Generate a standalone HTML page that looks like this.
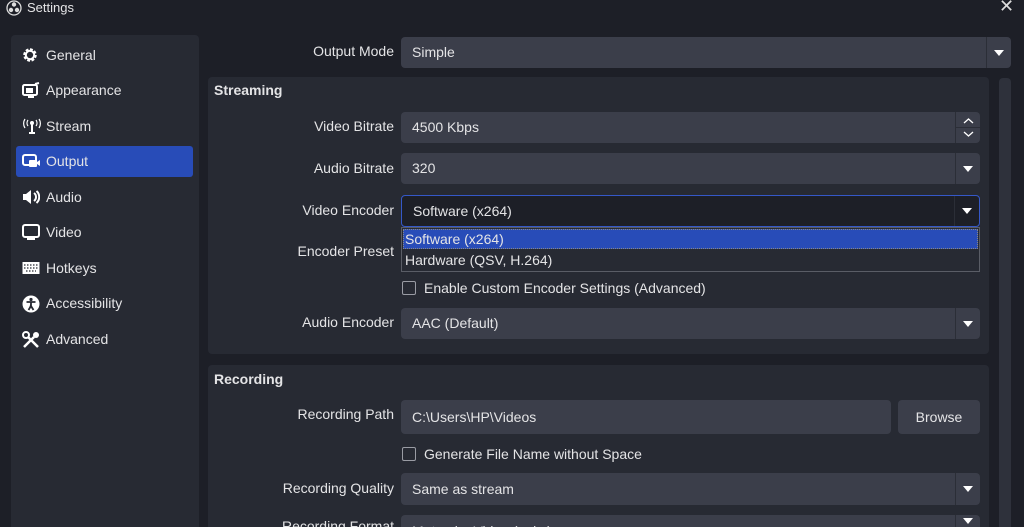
<!DOCTYPE html><html style="width:1024px;height:527px;overflow:hidden"><head><style>
*{box-sizing:border-box;margin:0;padding:0}
body{width:1024px;height:527px;overflow:hidden;background:#1d1f27;font-family:"Liberation Sans",sans-serif;font-size:14px;color:#e4e4e6;position:relative}
.a{position:absolute}
.panel{background:#272a33;border-radius:4px}
.item{position:absolute;left:16px;width:177px;height:31px;line-height:31px;padding-left:30px;font-size:14px}
.item svg{position:absolute;left:6px;top:7px}
.lbl{position:absolute;right:630px;text-align:right;white-space:nowrap}
.in{position:absolute;background:#3b3e4a;border-radius:4px;padding-left:11px;white-space:nowrap}
.arr{position:absolute;right:0;top:0;bottom:0;width:25px;border-left:1px solid #2b2e37}
.arr:after{content:"";position:absolute;left:7px;top:50%;margin-top:-3px;border-left:5.5px solid transparent;border-right:5.5px solid transparent;border-top:6px solid #fff}
.cb{position:absolute;width:14px;height:14px;border:1.5px solid #9a9ca4;border-radius:2px}
</style></head><body>
<svg class="a" style="left:6px;top:0" width="16" height="16" viewBox="0 0 16 16"><circle cx="8" cy="8" r="7" fill="none" stroke="#ddd" stroke-width="1.3"/><circle cx="8" cy="4.5" r="2.2" fill="#ddd"/><circle cx="5" cy="10" r="2.2" fill="#ddd"/><circle cx="11" cy="10" r="2.2" fill="#ddd"/></svg>
<div class="a" style="left:27px;top:0;font-size:13px">Settings</div>
<div class="a" style="left:999px;top:-4px;font-size:18px;color:#ddd">✕</div>

<div class="a panel" style="left:11px;top:35px;width:188px;height:492px;border-radius:4px 4px 0 0"></div>
<div class="item" style="top:40px"><svg width="16" height="16" viewBox="0 0 16 16"><circle cx="8" cy="8" r="5" fill="none" stroke="#fff" stroke-width="3.5" stroke-dasharray="2.5 1.4"/><circle cx="8" cy="8" r="4.2" fill="none" stroke="#fff" stroke-width="2"/></svg>General</div>
<div class="item" style="top:75px"><svg width="18" height="18" viewBox="0 0 18 18"><rect x="1" y="3" width="14" height="10" rx="1.5" fill="none" stroke="#fff" stroke-width="2"/><rect x="4" y="6" width="7" height="5" fill="#fff"/><path d="M6 15h6M13 2l4-1" stroke="#fff" stroke-width="2"/></svg>Appearance</div>
<div class="item" style="top:111px"><svg width="20" height="16" viewBox="0 0 20 16"><path d="M10 6v9M7 15h6" stroke="#fff" stroke-width="2"/><circle cx="10" cy="5" r="2" fill="#fff"/><path d="M6 2a5 5 0 0 0 0 6M14 2a5 5 0 0 1 0 6M3 1a8 8 0 0 0 0 9M17 1a8 8 0 0 1 0 9" fill="none" stroke="#fff" stroke-width="1.2"/></svg>Stream</div>
<div class="item" style="top:146px;background:#284cb8;border-radius:3px"><svg width="18" height="16" viewBox="0 0 18 16"><rect x="1" y="2" width="13" height="10" rx="2" fill="none" stroke="#fff" stroke-width="2"/><rect x="7" y="7" width="8" height="7" rx="1" fill="#fff"/><path d="M15 9l3-2v6l-3-2z" fill="#fff"/></svg>Output</div>
<div class="item" style="top:182px"><svg width="18" height="16" viewBox="0 0 18 16"><path d="M1 5h3l5-4v14l-5-4H1z" fill="#fff"/><path d="M12 4a5 5 0 0 1 0 8M14.5 2a8 8 0 0 1 0 12" fill="none" stroke="#fff" stroke-width="2"/></svg>Audio</div>
<div class="item" style="top:217px"><svg width="18" height="16" viewBox="0 0 18 16"><rect x="1" y="1" width="16" height="12" rx="2" fill="none" stroke="#fff" stroke-width="2"/><path d="M5 15h8" stroke="#fff" stroke-width="2"/></svg>Video</div>
<div class="item" style="top:253px"><svg width="18" height="16" viewBox="0 0 18 16"><rect x="0.5" y="2" width="17" height="12" fill="#fff"/><path d="M2 5h14M2 8h14M4 11h10" stroke="#272a33" stroke-width="1.3" stroke-dasharray="1.5 1.5"/></svg>Hotkeys</div>
<div class="item" style="top:288px"><svg width="18" height="18" viewBox="0 0 18 18"><circle cx="9" cy="9" r="8.5" fill="#fff"/><circle cx="9" cy="4.5" r="1.6" fill="#272a33"/><path d="M4.5 7h9M9 7v4l-2.5 4M9 11l2.5 4" stroke="#272a33" stroke-width="1.8"/></svg>Accessibility</div>
<div class="item" style="top:324px"><svg width="18" height="18" viewBox="0 0 18 18"><path d="M2 16L12 6M6 6l10 10" stroke="#fff" stroke-width="2.5"/><circle cx="4" cy="4" r="3" fill="none" stroke="#fff" stroke-width="2"/><circle cx="14" cy="4" r="3" fill="#fff"/></svg>Advanced</div>

<div class="lbl" style="top:43px">Output Mode</div>
<div class="in" style="left:401px;top:37px;width:610px;height:31px;line-height:31px">Simple<div class="arr"></div></div>

<div class="a" style="left:999px;top:78px;width:12px;height:449px;background:#2e313b;border-radius:4px 4px 0 0"></div>

<div class="a panel" style="left:208px;top:77px;width:781px;height:277px"></div>
<div class="a" style="left:214px;top:82px;font-weight:bold">Streaming</div>
<div class="lbl" style="top:118px">Video Bitrate</div>
<div class="in" style="left:401px;top:112px;width:579px;height:31px;line-height:31px">4500 Kbps<div class="a" style="right:0;top:0;bottom:0;width:25px;border-left:1px solid #2b2e37"><div class="a" style="left:0;right:0;top:15px;border-top:1px solid #2b2e37"></div><svg class="a" style="left:6px;top:3px" width="13" height="25" viewBox="0 0 13 25"><path d="M2 8l4.5-4 4.5 4M2 17l4.5 4 4.5-4" fill="none" stroke="#fff" stroke-width="1.3"/></svg></div></div>
<div class="lbl" style="top:160px">Audio Bitrate</div>
<div class="in" style="left:401px;top:153px;width:579px;height:31px;line-height:31px">320<div class="arr"></div></div>
<div class="lbl" style="top:202px">Video Encoder</div>
<div class="in" style="left:401px;top:195px;width:579px;height:32px;line-height:30px;background:#1d1f27;border:1px solid #3558c8">Software (x264)<div class="arr"></div></div>
<div class="lbl" style="top:243px">Encoder Preset</div>
<div class="a" style="left:401px;top:227px;width:579px;height:45px;background:#272a33;border:1px solid #5a5d66"></div>
<div class="a" style="left:403px;top:229px;width:575px;height:20px;background:#284cb8;border:1px dotted #888;padding-left:1px;line-height:18px">Software (x264)</div>
<div class="a" style="left:405px;top:250px;line-height:20px">Hardware (QSV, H.264)</div>
<div class="cb" style="left:402px;top:281px"></div>
<div class="a" style="left:424px;top:280px">Enable Custom Encoder Settings (Advanced)</div>
<div class="lbl" style="top:314px">Audio Encoder</div>
<div class="in" style="left:401px;top:308px;width:579px;height:31px;line-height:31px">AAC (Default)<div class="arr"></div></div>

<div class="a panel" style="left:208px;top:365px;width:781px;height:162px;border-radius:4px 4px 0 0"></div>
<div class="a" style="left:214px;top:371px;font-weight:bold">Recording</div>
<div class="lbl" style="top:406px">Recording Path</div>
<div class="in" style="left:401px;top:400px;width:490px;height:34px;line-height:34px">C:\Users\HP\Videos</div>
<div class="in" style="left:898px;top:400px;width:82px;height:34px;line-height:34px;padding:0;text-align:center">Browse</div>
<div class="cb" style="left:402px;top:447px"></div>
<div class="a" style="left:424px;top:446px">Generate File Name without Space</div>
<div class="lbl" style="top:480px">Recording Quality</div>
<div class="in" style="left:401px;top:473px;width:579px;height:32px;line-height:32px">Same as stream<div class="arr"></div></div>
<div class="lbl" style="top:518px">Recording Format</div>
<div class="in" style="left:401px;top:515px;width:579px;height:12px;line-height:32px;overflow:hidden;border-radius:4px 4px 0 0">Matroska Video (.mkv)<div class="arr"></div></div>
</body></html>
